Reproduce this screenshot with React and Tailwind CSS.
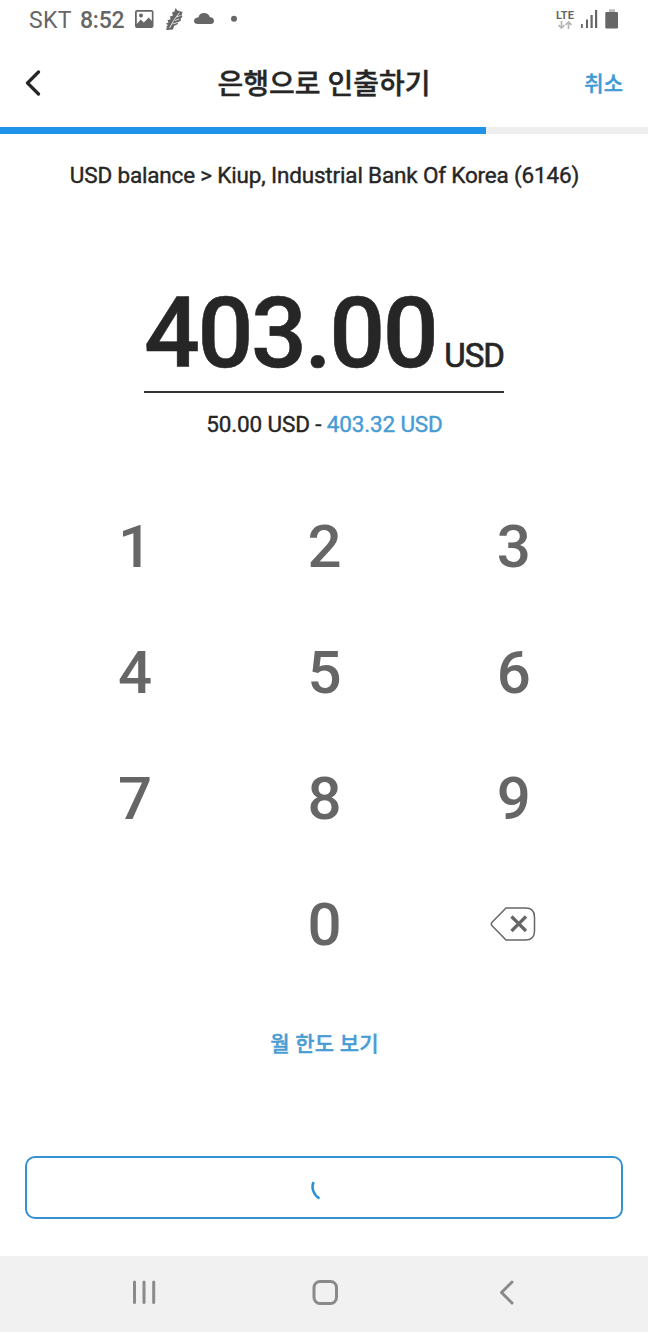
const KEYS = ['1', '2', '3', '4', '5', '6', '7', '8', '9', '', '0', 'delete'];

function StatusBar() {
  return (
    <div className="flex h-10 items-center justify-between pl-[29px] pr-[29px] text-[#666666]">
      <div className="flex items-center">
        <span className="w-[51px] whitespace-nowrap pt-0.5 text-[23px] leading-[38px] tracking-[0.3px]">SKT</span>
        <span className="w-[54px] whitespace-nowrap pt-0.5 text-[23px] font-medium leading-[38px] tracking-[-0.2px]">8:52</span>
        <svg className="h-10 w-[106px]" viewBox="134 0 106 40" fill="currentColor">
          <path
            fillRule="evenodd"
            d="M137 10h14.500q2 0 2 2v14q0 2-2 2H137q-2 0-2-2V12q0-2 2-2zM136.800 11.800v12.200l4-4.500 3 3 5-5 3 3.500v-9.200z"
          />
          <circle cx="141" cy="15.500" r="2" />
          <path d="M175.500 8l2 2.500 5 1.500-1 3.500 1 1-2 2.500.5 1.500-3.500 2 .5 1.500-4 2-1 3.500-6.500.5-.5-1.500 1.500-.5-1.500-1.500 2-1-2-2 2.500-1-1-2.500 3-.5-.5-3 3-1-1-3 2.500-1z" />
          <path d="M169.500 28l4.500-8 5.500-7.500M172.500 24l5-1.500M175 20.500l4-1.500M176.500 17l4-1.500" fill="none" stroke="#fff" strokeWidth=".8" />
          <path d="M198 24q-4-.2-4-3 0-3.300 4.500-3.800Q199.500 13 204 13q4.500 0 5.800 4 4.200.5 4.200 4 0 2.800-3.500 3z" />
          <circle cx="234" cy="18.700" r="3" />
        </svg>
      </div>
      <div className="flex items-center">
        <div className="flex w-[20px] flex-col items-center">
          <span className="text-[11px] font-bold leading-[9px] tracking-[0.1px]">LTE</span>
          <svg className="mt-px h-2 w-3.5" viewBox="0 0 14 8" fill="none" stroke="#b5b5b5" strokeWidth="1.700">
            <path d="M3.500 0v7M.5 4l3 3 3-3M10.500 8V1M7.500 4l3-3 3 3" />
          </svg>
        </div>
        <svg className="ml-[5px] h-10 w-[39px]" viewBox="580 0 39 40" fill="currentColor">
          <rect x="581" y="24" width="1.800" height="4" />
          <rect x="586" y="19.500" width="2" height="8.500" />
          <rect x="590.500" y="15" width="2.200" height="13" />
          <rect x="595" y="10" width="2.200" height="18" />
          <rect x="609" y="9.300" width="6" height="4" fill="#bbb" />
          <rect x="605.300" y="12" width="12.700" height="16.500" rx="1.300" />
        </svg>
      </div>
    </div>
  );
}

function DeleteIcon() {
  return (
    <svg className="h-[34px] w-[46px]" viewBox="0 0 46 34" fill="none" stroke="#666666" strokeLinejoin="round">
      <path d="M16 1H35.500Q44.500 1 44.500 10V24Q44.500 33 35.500 33H16L2.300 19Q.3 17 2.300 15Z" strokeWidth="1.500" />
      <path d="M21.500 9.500l14.500 14.500M36 9.500L21.500 24" strokeWidth="3.200" />
    </svg>
  );
}

function App() {
  return (
    <div className="flex h-[1332px] w-[648px] flex-col overflow-hidden bg-white font-[Roboto,'Noto_Sans_CJK_KR',sans-serif] text-[#262626]">
      <StatusBar />

      <header className="flex h-[87px] items-center justify-between pl-[25px] pr-[25px]">
        <div className="w-20">
          <svg className="h-7 w-4" viewBox="0 0 16 28" fill="none" stroke="currentColor" strokeWidth="3.200" strokeLinecap="round" strokeLinejoin="round">
            <path d="M13.500 2L2.500 13l11 11" />
          </svg>
        </div>
        <h1 className="whitespace-nowrap pt-0.5 text-[28px] font-medium leading-10 [-webkit-text-stroke:0.4px_currentColor]">은행으로 인출하기</h1>
        <button className="w-20 pt-0.5 text-right text-[21px] font-medium text-[#3f9ad6] [-webkit-text-stroke:0.4px_currentColor]">취소</button>
      </header>

      <div className="h-[7px] bg-[#eeeeee]">
        <div className="h-full w-3/4 bg-[#1f93e8]" />
      </div>

      <p className="mt-[26px] pl-px text-center text-[22.500px] leading-[30px] tracking-[-0.17px] [-webkit-text-stroke:0.4px_currentColor]">
        USD balance &gt; Kiup, Industrial Bank Of Korea (6146)
      </p>

      <div className="mx-auto mt-[91px] flex h-[112px] w-[360px] items-baseline justify-between border-b-2 border-[#333333] pt-[3px]">
        <span className="text-[98.500px] font-medium leading-[100px] tracking-[-2.500px] [-webkit-text-stroke:0.6px_currentColor]">403.00</span>
        <span className="text-[33px] tracking-[-1px] [-webkit-text-stroke:0.7px_currentColor]">USD</span>
      </div>
      <p className="mt-[16px] pl-px text-center text-[22.500px] leading-[30px] tracking-[-0.15px] [-webkit-text-stroke:0.4px_currentColor]">
        50.00 USD - <span className="text-[#479cd5]">403.32 USD</span>
      </p>

      <div className="mx-auto mt-[44px] grid w-[568px] grid-cols-3 text-[60px] font-medium leading-none text-[#666666]">
        {KEYS.map((key, i) => (
          <button key={i} className="flex h-[126px] items-center justify-center">
            {key === 'delete' ? <DeleteIcon /> : <span className="pl-px pt-0.5">{key}</span>}
          </button>
        ))}
      </div>

      <button className="mt-[42px] pl-px text-[21px] font-medium leading-[30px] tracking-[0.2px] text-[#479cd5] [-webkit-text-stroke:0.4px_currentColor]">월 한도 보기</button>

      <div className="mx-[25px] mt-[97px] flex h-[63px] items-center justify-center rounded-[10px] border-2 border-[#3492d2]">
        <svg className="h-6 w-7" viewBox="0 0 28 24" fill="none" stroke="#2b8fdb" strokeWidth="2.500">
          <path d="M3.500 6C1 12 3.500 19 9.500 22.500" />
        </svg>
      </div>

      <nav className="mt-auto h-[76px] bg-[#f1f1f1]">
        <svg className="h-[76px] w-[648px]" viewBox="0 0 648 76" fill="none" stroke="#8a8a8a" strokeWidth="3" strokeLinecap="round" strokeLinejoin="round">
          <path d="M134.500 26v20.500M144 26v20.500M153.700 26v20.500" />
          <rect x="314" y="25.500" width="22.500" height="22" rx="6" />
          <path d="M512 26l-10.500 10.500L512 47" />
        </svg>
      </nav>
    </div>
  );
}

export default App;
